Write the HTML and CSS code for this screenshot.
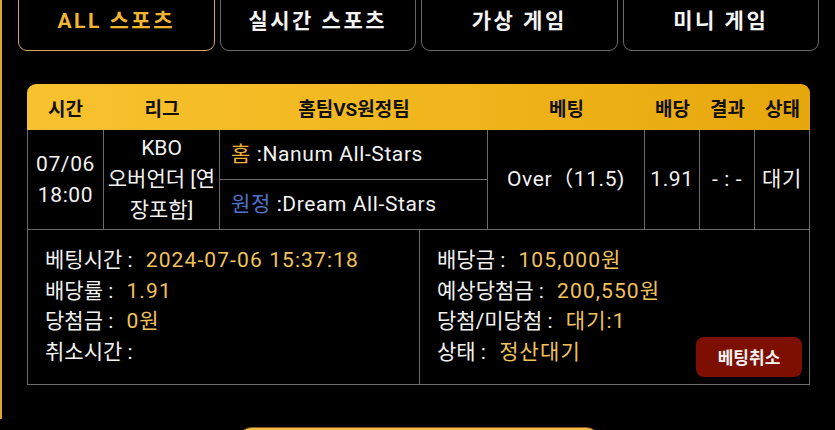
FILE: index.html
```html
<!DOCTYPE html>
<html lang="ko">
<head>
<meta charset="utf-8">
<title>베팅내역</title>
<link rel="stylesheet" href="styles.css">
</head>
<body>
<div class="page">
  <nav class="tabs">
    <a class="tab active">ALL 스포츠</a>
    <a class="tab">실시간 스포츠</a>
    <a class="tab">가상 게임</a>
    <a class="tab">미니 게임</a>
  </nav>

  <section class="board">
    <div class="thead">
      <span>시간</span>
      <span>리그</span>
      <span>홈팀VS원정팀</span>
      <span>베팅</span>
      <span>배당</span>
      <span>결과</span>
      <span>상태</span>
    </div>

    <div class="trow">
      <div class="cell">07/06<br>18:00</div>
      <div class="cell league">KBO<br>오버언더 [연장포함]</div>
      <div class="cell teams">
        <div class="team"><span><span class="home">홈</span> :Nanum All-Stars</span></div>
        <div class="team"><span><span class="away">원정</span> :Dream All-Stars</span></div>
      </div>
      <div class="cell">Over（11.5)</div>
      <div class="cell">1.91</div>
      <div class="cell">- : -</div>
      <div class="cell">대기</div>
    </div>

    <div class="detail">
      <div class="dcol">
        <p class="line">베팅시간 : <span class="val">2024-07-06 15:37:18</span></p>
        <p class="line">배당률 : <span class="val">1.91</span></p>
        <p class="line">당첨금 : <span class="val">0원</span></p>
        <p class="line">취소시간 :</p>
      </div>
      <div class="dcol">
        <p class="line">배당금 : <span class="val">105,000원</span></p>
        <p class="line">예상당첨금 : <span class="val">200,550원</span></p>
        <p class="line">당첨/미당첨 : <span class="val">대기:1</span></p>
        <div class="last">
          <p class="line">상태 : <span class="val">정산대기</span></p>
          <button class="cancel">베팅취소</button>
        </div>
      </div>
    </div>
  </section>

  <div class="more"></div>
</div>
</body>
</html>
```

FILE: styles.css
```css
* { box-sizing: border-box; }

html, body {
  margin: 0;
  padding: 0;
  background: #000;
  height: 100%;
  overflow: hidden;
}

body {
  font-family: "Roboto", "Noto Sans CJK KR", sans-serif;
  color: #f2f2f2;
}

.page {
  height: 100%;
  border-left: 2px solid #e2a526;
}

.tabs {
  display: flex;
  gap: 5px;
  width: 801px;
  margin: -11px 0 0 16px;
}

.tab {
  flex: 1;
  height: 62px;
  display: flex;
  align-items: center;
  justify-content: center;
  border: 1.5px solid #6a6a6a;
  border-radius: 9px;
  font-size: 21px;
  font-weight: 700;
  letter-spacing: 2.5px;
  color: #f4f4f4;
  padding-bottom: 3px;
}

.tab.active {
  border-color: #d2a666;
  color: #f2b532;
}

.board {
  width: 783px;
  margin: 33px 0 0 25px;
}

.thead,
.trow {
  display: grid;
  grid-template-columns: 77px 116px 268px 157px 55px 55px 55px;
}

.thead {
  height: 46px;
  border-radius: 9px 9px 0 0;
  background: linear-gradient(90deg, #f8c22f 0%, #f0b51c 55%, #e6a70c 100%);
  color: #111;
  font-weight: 700;
  font-size: 19px;
  align-items: center;
  text-align: center;
}

.trow {
  height: 100px;
  font-size: 21px;
  line-height: 31px;
}

.cell {
  display: flex;
  align-items: center;
  justify-content: center;
  text-align: center;
  border-right: 1px solid #6b6b6b;
  border-bottom: 1px solid #6b6b6b;
  letter-spacing: 0.6px;
}

.cell:first-child {
  border-left: 1px solid #6b6b6b;
}

.league {
  padding: 0 2px;
  letter-spacing: 0;
}

.teams {
  flex-direction: column;
  align-items: stretch;
}

.team {
  flex: 1;
  display: flex;
  align-items: center;
  padding-left: 11px;
  text-align: left;
}

.team + .team {
  border-top: 1px solid #6b6b6b;
}

.home { color: #f1b23c; }
.away { color: #4f73c8; }

.detail {
  display: grid;
  grid-template-columns: 391px 392px;
  height: 155px;
  border-left: 1px solid #6b6b6b;
  border-right: 1px solid #6b6b6b;
  border-bottom: 1px solid #6b6b6b;
}

.dcol {
  padding: 15px 9px 0 17px;
}

.dcol + .dcol {
  border-left: 1px solid #6b6b6b;
}

.line {
  margin: 0;
  font-size: 21px;
  line-height: 30.5px;
  color: #f2f2f2;
}

.val {
  color: #f1c25c;
  margin-left: 8px;
  letter-spacing: 1.1px;
}

.last {
  display: flex;
  justify-content: space-between;
  align-items: flex-start;
}

.cancel {
  width: 106px;
  height: 40px;
  margin-top: 0;
  border: none;
  border-radius: 8px;
  background: #7d0f02;
  color: #f4f4f4;
  font-family: "Noto Sans CJK KR", sans-serif;
  font-size: 17px;
  font-weight: 700;
}

.more {
  width: 362px;
  height: 30px;
  margin: 42px 0 0 236px;
  border-radius: 14px 14px 0 0;
  border-top: 1px solid #8a5a20;
  background: linear-gradient(180deg, #f2c04a 0%, #e3a630 100%);
}
```
